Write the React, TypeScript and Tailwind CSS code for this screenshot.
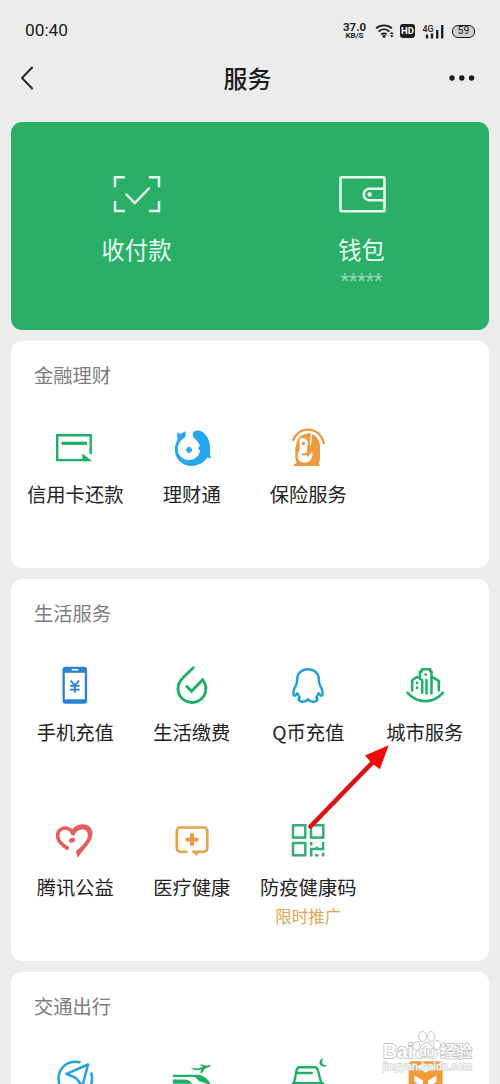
import React from 'react'

type Service = {
    icon: React.ReactNode
    label?: string
    note?: string
}

const GREEN = '#1fb066'
const BLUE = '#1ea3e0'
const ORANGE = '#eb9a3f'

const Icon = ({ children }: { children: React.ReactNode }) => (
    <svg viewBox="0 0 40 40" className="h-10 w-10 shrink-0 overflow-visible" fill="none">
        {children}
    </svg>
)

const CreditCardIcon = () => (
    <Icon>
        <path d="M35.700 26V7.300H2.200v24.800H31" stroke={GREEN} strokeWidth="2.400" />
        <path d="M6.500 15.300H32" stroke={GREEN} strokeWidth="3.200" />
        <path d="M27.300 25.500 37.300 33.200H27.300z" fill={GREEN} />
    </Icon>
)

const WealthIcon = () => (
    <Icon>
        <path
            d="M5 4.500 8.300 6l5.200-2.700c.3 2.500.2 4.500-.6 6.200C8.500 12 5.600 16.500 5.800 21.500c.2 6 5 10.500 11 10.500 6.200 0 11.500-4.800 11.500-11 0-4.500-2.300-7.500-5.800-10.500-1.300-1.200-1.900-2.700-1.800-4.500.2-2.200 2-3.600 4.800-3.600 7 0 12.500 8 12.500 17.500v5.500l.8 5-3.300-.8C32 34.800 26 38 19.500 38 10.500 38 2.800 31 2.800 21.500c0-3.500 1-6.500 2.700-9.200z"
            fill="#24a7ec"
        />
        <path d="M14 22h6M17 19v6" stroke="#24a7ec" strokeWidth="3" />
        <path d="m26.500 17.500 2.500 2.500v2.500l-2.500-.8z" fill="#24a7ec" />
    </Icon>
)

const InsuranceIcon = () => (
    <Icon>
        <path d="M5.300 11.800C8.500 4.500 14 1.600 20 1.600c7.500 0 13.700 5 15.700 13.400" stroke={ORANGE} strokeWidth="2.400" strokeLinecap="round" />
        <path
            d="M9.500 11.500C12.500 7 17 5 22 5.500c6.500 1.200 10 6.500 10 14V31l-1 4 .8 3H5.800l-.2-1.800 2.900-.9L7.300 30v-9.500l1.200-5z"
            fill={ORANGE}
        />
        <path
            d="M11.500 11.500c2.500-2.500 7-1.500 8.200 2 .7 3-.6 5.200-.6 7.500l-.5 4.500 2 .5 3.700-2c.8 6-2.300 10.700-7.500 10.700-5 0-7.500-3.500-7-8 .3-3 2-4.500 2-7z"
            fill="#fff"
        />
        <circle cx="15.300" cy="15.500" r="1.700" fill={ORANGE} />
        <path d="M21.500 5 20 28.500M14 26.500l8.500-1" stroke={ORANGE} strokeWidth="1.900" />
        <path d="M23.500 6 22.400 17.500" stroke="#fff" strokeWidth="1.300" />
    </Icon>
)

const PhoneIcon = () => (
    <Icon>
        <rect x="7.500" y="0.800" width="24.600" height="37" rx="3" fill="#2a83cf" />
        <rect x="9.800" y="6.800" width="20" height="26.500" fill="#fff" />
        <path d="M17.200 3.700h5.600" stroke="#fff" strokeWidth="1.500" strokeLinecap="round" />
        <path
            d="m15.600 14.500 4.200 5.200 4.200-5.200M19.800 19.500v7.200M15 19.900h9.600M15 23.600h9.600"
            stroke="#2a83cf"
            strokeWidth="1.900"
        />
    </Icon>
)

const DropIcon = () => (
    <Icon>
        <path
            d="M21.300 1.800C16 6.800 11.500 11 8.500 14.700A13.900 13.900 0 1 0 30.700 13.800L19.500 25.300l-4.600-4.900"
            stroke={GREEN}
            strokeWidth="2.900"
            strokeLinecap="round"
        />
    </Icon>
)

const PenguinIcon = () => (
    <Icon>
        <path
            d="M20 3.200c-6.700 0-10.900 4.600-10.900 10.500 0 2 .1 3.300-1 5.300-1.700 3-3.200 5.800-2.700 9.200.2 1.800 1.600 2 2.700.4l1.500-1.300c.5 2 1.200 3 2.200 4.200-2 1-1.600 4.200 3.200 4.200 2.200 0 3.600-.7 5-2.500 1.400 1.800 2.800 2.500 5 2.500 4.800 0 5.200-3.200 3.200-4.200 1-1.200 1.700-2.200 2.200-4.200l1.500 1.300c1.100 1.600 2.500 1.400 2.700-.4.500-3.400-1-6.200-2.700-9.200-1.100-2-1-3.300-1-5.300 0-5.900-4.200-10.500-10.900-10.500z"
            stroke="#25a0d5"
            strokeWidth="2.500"
            strokeLinejoin="round"
        />
    </Icon>
)

const CityIcon = () => (
    <Icon>
        <g stroke={GREEN} strokeWidth="2.500" strokeLinecap="round" strokeLinejoin="round">
            <path d="M2.500 26.600C12 38 28.500 38 38 26.600" />
            <path d="M7.200 24.500V14.200l5-3.500 5 3.500v12.500" />
            <path d="M14.900 11V5.500h2V3.200h8.300v2.300h1.300v22" />
            <path d="M26.500 10.600l7.300 4.300v9.500M21.500 14v13.500" />
        </g>
        <path d="M12.200 15.800v2.400M12.200 20.500v2.400M20.700 7.300v2.400" stroke={GREEN} strokeWidth="2.400" />
    </Icon>
)

const HeartIcon = () => (
    <Icon>
        <path
            d="M13.500 27.800C7 24.300 2.300 19.500 2.600 14 3 8.800 8 6 12.700 7.500c3 1 5 3.700 5.300 6.500"
            stroke="#e2615f"
            strokeWidth="3.600"
        />
        <path
            d="M16.500 10.300C18.500 5.600 22.700 3.300 28 3.300c5.700 0 9.600 4.200 9.500 9.500-.2 8-8 14.500-14.800 23.900l-1.800-6.200c5.500-5 12.300-11 12-16.700-.3-5-4.800-6.400-8.600-4.700-2.600 1.100-4.600 3.700-5.600 6.500z"
            fill="#e2615f"
        />
        <ellipse cx="17" cy="19.300" rx="3.200" ry="2.300" fill="#e2615f" transform="rotate(-15 17 19.300)" />
    </Icon>
)

const MedicalIcon = () => (
    <Icon>
        <path
            d="M15.500 30.800H8.300a3.500 3.500 0 0 1-3.500-3.500V10a3.500 3.500 0 0 1 3.500-3.500h23.500A3.500 3.500 0 0 1 35.300 10v17.300a3.500 3.500 0 0 1-3.500 3.500H20.500"
            stroke="#e5a24a"
            strokeWidth="2.600"
        />
        <path d="M20 30h8.500l-4.200 5z" fill="#e5a24a" />
        <path d="M13.500 18.600h13M20 12.300v12.600" stroke={ORANGE} strokeWidth="3.900" />
    </Icon>
)

const HealthCodeIcon = () => (
    <Icon>
        <g stroke="#35ad78" strokeWidth="2.500">
            <rect x="5" y="4.300" width="12.300" height="12.300" />
            <rect x="23" y="4.300" width="12.300" height="12.300" />
            <rect x="5" y="22" width="12.300" height="12.300" />
            <path d="M23.200 21v3.400M35.100 21v8.200M23.200 35.400V28H36M29 28v-2.600M35.100 31.800v3.600M27 34.200h3.300" />
        </g>
    </Icon>
)

const TravelIcon = () => (
    <Icon>
        <path
            d="M25.500 3.500A16.800 16.800 0 1 0 32 31.500 16.800 16.800 0 0 0 36 13.500"
            stroke={BLUE}
            strokeWidth="2.500"
        />
        <path d="M33 5.500 11.500 14.800l9.700 4.400L27.500 27z" stroke={BLUE} strokeWidth="2.500" strokeLinejoin="round" />
    </Icon>
)

const TrainPlaneIcon = () => (
    <Icon>
        <path d="M18.500 8.800 26 9.600 31 7.800 27.500 5.500h2l5.200 1.200 3-1c1.300 0 1.300 1.200.2 1.800l-5 2.500-3 4h-1.700l1-3.500-6 .8z" fill={GREEN} />
        <path d="M.8 15.800h24.500c5.500.3 10 3.300 12.700 8.200v2L27 22l-4-4H.8z" fill={GREEN} />
        <path d="M.8 20.500h12c3 0 5.700 1.500 7.500 4.300H.8z" fill={GREEN} />
    </Icon>
)

const HotelIcon = () => (
    <Icon>
        <path
            d="m5.500 27 3-15.500c.5-2.300 1.500-3.300 3.500-3.300h14.500c2 0 3 1 3.500 3.300L34 27M5 24.300h30M9.500 14h14.300"
            stroke={GREEN}
            strokeWidth="2.400"
            strokeLinecap="round"
        />
        <path d="M35.800-.8c-3 2.800-2 7.700 3.800 7.300-4.200 3.300-9.200-.5-8-4.200.7-1.900 2.200-2.800 4.200-3.100z" fill={GREEN} />
    </Icon>
)

const PackageIcon = () => (
    <Icon>
        <rect x="3.600" y="2.300" width="34" height="34" rx="3.500" fill="#f39a36" />
        <path d="m12 8 4-2.500 4.500 2.200L25 5.500 29.500 8l-9 5.800zM9.500 16.500l8.500 5v15l-8.500-5v-5l3-1.500-3-2.500zM31.500 16.500l-8.500 5v15l8.500-5v-5l-3-1.500 3-2.500z" fill="#fff" />
    </Icon>
)

const SECTIONS: { title: string; items: Service[] }[] = [
    {
        title: '金融理财',
        items: [
            { label: '信用卡还款', icon: <CreditCardIcon /> },
            { label: '理财通', icon: <WealthIcon /> },
            { label: '保险服务', icon: <InsuranceIcon /> },
        ],
    },
    {
        title: '生活服务',
        items: [
            { label: '手机充值', icon: <PhoneIcon /> },
            { label: '生活缴费', icon: <DropIcon /> },
            { label: 'Q币充值', icon: <PenguinIcon /> },
            { label: '城市服务', icon: <CityIcon /> },
            { label: '腾讯公益', icon: <HeartIcon /> },
            { label: '医疗健康', icon: <MedicalIcon /> },
            { label: '防疫健康码', icon: <HealthCodeIcon />, note: '限时推广' },
        ],
    },
    {
        title: '交通出行',
        items: [
            { icon: <TravelIcon /> },
            { icon: <TrainPlaneIcon /> },
            { icon: <HotelIcon /> },
            { icon: <PackageIcon /> },
        ],
    },
]

function StatusBar() {
    return (
        <div className="flex h-[62px] items-center justify-between px-[25px] font-[Roboto,sans-serif] text-[#1c1c1c]">
            <span className="text-[17.3px] leading-none">00:40</span>
            <div className="flex items-center">
                <div className="mr-[9px] flex w-[23px] flex-col items-center font-bold">
                    <span className="text-[11.5px] leading-[10px]">37.0</span>
                    <span className="text-[8px] leading-[8px]">KB/S</span>
                </div>
                <svg viewBox="0 0 19 14" className="mr-[6px] h-3.5 w-[19px]" fill="none">
                    <path d="M1 4.300C5.500.3 12.500.3 17 4.300M3.600 7.600c3.200-2.900 7.600-2.900 10.800 0M6.300 10.500c1.700-1.400 3.700-1.400 5.400 0" stroke="#1c1c1c" strokeWidth="1.800" />
                    <circle cx="9" cy="12.300" r="1.500" fill="#1c1c1c" />
                    <path d="m14.800 10 2-2.300 2 2.300zM14.800 11.300l2 2.300 2-2.300z" fill="#1c1c1c" />
                </svg>
                <div className="mr-2 flex h-3.5 w-[15px] items-center justify-center rounded-[3px] bg-[#1c1c1c] text-[9.5px] leading-none font-bold text-white">
                    HD
                </div>
                <svg viewBox="0 0 21 15" className="mr-2 h-[15px] w-[21px] overflow-visible">
                    <text x="-.5" y="7.500" fontSize="8.800" fontWeight="500" fill="#1c1c1c">4G</text>
                    <path d="M4 10.500v4M9 9.500v5M14.200 6v8.500M19.200 1v13.500" stroke="#1c1c1c" strokeWidth="2.300" />
                </svg>
                <div className="flex h-[13px] w-[23px] items-center justify-center rounded-[6px] border-[1.5px] border-[#1c1c1c] bg-[#d0d0d0] text-[10.5px] leading-none">
                    59
                </div>
            </div>
        </div>
    )
}

function NavBar() {
    return (
        <div className="mb-7 flex h-8 items-center justify-between pr-[25px] pl-5">
            <svg viewBox="0 0 14 24" className="h-6 w-[26px]" preserveAspectRatio="xMinYMid" fill="none">
                <path d="M12.600 1 2 12l10.600 11" stroke="#222" strokeWidth="1.900" />
            </svg>
            <h1 className="text-2xl leading-8 font-medium text-[#1c1c1c]">服务</h1>
            <svg viewBox="0 0 26 6" className="h-1.5 w-[26px]">
                <circle cx="3" cy="3" r="2.700" fill="#1c1c1c" />
                <circle cx="12.800" cy="3" r="2.700" fill="#1c1c1c" />
                <circle cx="22.600" cy="3" r="2.700" fill="#1c1c1c" />
            </svg>
        </div>
    )
}

function PayCard() {
    return (
        <div className="grid h-[208px] grid-cols-2 rounded-[11px] bg-[#2bae67] pt-[52px] pr-[15px] pl-[13px] text-[#e6fff0]">
            <div className="flex flex-col items-center">
                <svg viewBox="0 0 48 40" className="h-10 w-12" fill="none" stroke="#e6fff0" strokeWidth="2.500">
                    <path d="M12 3.200H2v10M36 3.200h10v10M12 37H2V27M36 37h10V27" />
                    <path d="m13.500 20.500 8.300 8.500 14-14.500" strokeLinecap="round" />
                </svg>
                <span className="mt-[17px] text-[23.3px] leading-9">收付款</span>
            </div>
            <div className="flex flex-col items-center">
                <svg viewBox="0 0 48 40" className="h-10 w-12" fill="none" stroke="#e6fff0" strokeWidth="2.500">
                    <rect x="2.500" y="3.200" width="44" height="34" rx="1" />
                    <path d="M46 14.700H31.500a5.800 5.800 0 0 0 0 11.600H46" />
                    <circle cx="31.700" cy="20.500" r="2.300" fill="#e6fff0" stroke="none" />
                </svg>
                <span className="mt-[17px] text-[23.3px] leading-9">钱包</span>
                <span className="mt-[3px] font-[Roboto,sans-serif] text-[19.5px] leading-6 text-[#95d7b3]">*****</span>
            </div>
        </div>
    )
}

function ServiceItem({ label, icon, note }: Service) {
    return (
        <div className="flex h-[140px] flex-col items-center whitespace-nowrap">
            {icon}
            {label && <span className="mt-3 text-[19.3px] leading-7 text-[#222]">{label}</span>}
            {note && <span className="mt-[3px] text-[16.5px] leading-6 text-[#e0a850]">{note}</span>}
        </div>
    )
}

function ServiceSection({ title, items }: { title: string; items: Service[] }) {
    return (
        <section className="rounded-[11px] bg-white px-1.5 pt-5">
            <h2 className="mb-[39px] pl-[17px] text-[19.3px] leading-7 text-[#7d7d7d]">{title}</h2>
            <div className="grid grid-cols-4 gap-y-[15px]">
                {items.map((item, i) => (
                    <ServiceItem key={i} {...item} />
                ))}
            </div>
        </section>
    )
}

// Red pointer laid over the list, aimed at the city services entry
const Arrow = () => (
    <svg viewBox="0 0 84 88" className="absolute top-[743px] left-[306px] h-[88px] w-[84px]">
        <path d="M4.500 83.500 67 19" stroke="#dd1111" strokeWidth="4.600" strokeLinecap="round" />
        <path d="M82.700 2.300 59 12.500l6.300 7.200 8.500 6.600z" fill="#f40909" />
    </svg>
)

const Watermark = () => (
    <svg viewBox="0 0 96 48" className="absolute top-[1028px] left-[380px] h-12 w-24 font-['Liberation_Sans','Noto_Sans_CJK_SC',sans-serif]">
        <text x="3" y="42" fontSize="10.500" textLength="89" fill="#fff" stroke="#d2d2d2" strokeWidth="1.300" paintOrder="stroke">
            jingyan.baidu.com
        </text>
        <g fill="#fff" stroke="#c4c4c4" strokeWidth="1" strokeLinejoin="round">
            <g strokeWidth="1.800" paintOrder="stroke">
                <text x="3" y="29.500" fontSize="20" fontWeight="700" textLength="30" lengthAdjust="spacingAndGlyphs">Bai</text>
                <text x="60" y="29" fontSize="16" fontWeight="500" textLength="32" lengthAdjust="spacingAndGlyphs">经验</text>
            </g>
            <ellipse cx="36.500" cy="18" rx="3.600" ry="4.600" />
            <ellipse cx="42.500" cy="8.500" rx="3.800" ry="5" />
            <ellipse cx="51" cy="8.500" rx="3.800" ry="5" />
            <ellipse cx="57" cy="17" rx="3.600" ry="4.600" />
            <path d="M46.500 14.500c4 0 5 4.500 8.500 7.500 4 3.500 3 8.500-2 8.500-2.500 0-4-.8-6.500-.8s-4 .8-6.500.8c-5 0-6-5-2-8.500 3.500-3 4.500-7.500 8.500-7.500z" />
            <text x="39.500" y="28" fontSize="12" fontWeight="700" strokeWidth="1.600" paintOrder="stroke">du</text>
        </g>
    </svg>
)

export default function App() {
    return (
        <div className="relative h-[1084px] w-[500px] overflow-hidden bg-[#ececec] font-['Noto_Sans_CJK_SC',sans-serif]">
            <StatusBar />
            <NavBar />
            <main className="flex flex-col gap-[11px] px-[11px]">
                <PayCard />
                {SECTIONS.map((section) => (
                    <ServiceSection key={section.title} {...section} />
                ))}
            </main>
            <Arrow />
            <Watermark />
        </div>
    )
}
